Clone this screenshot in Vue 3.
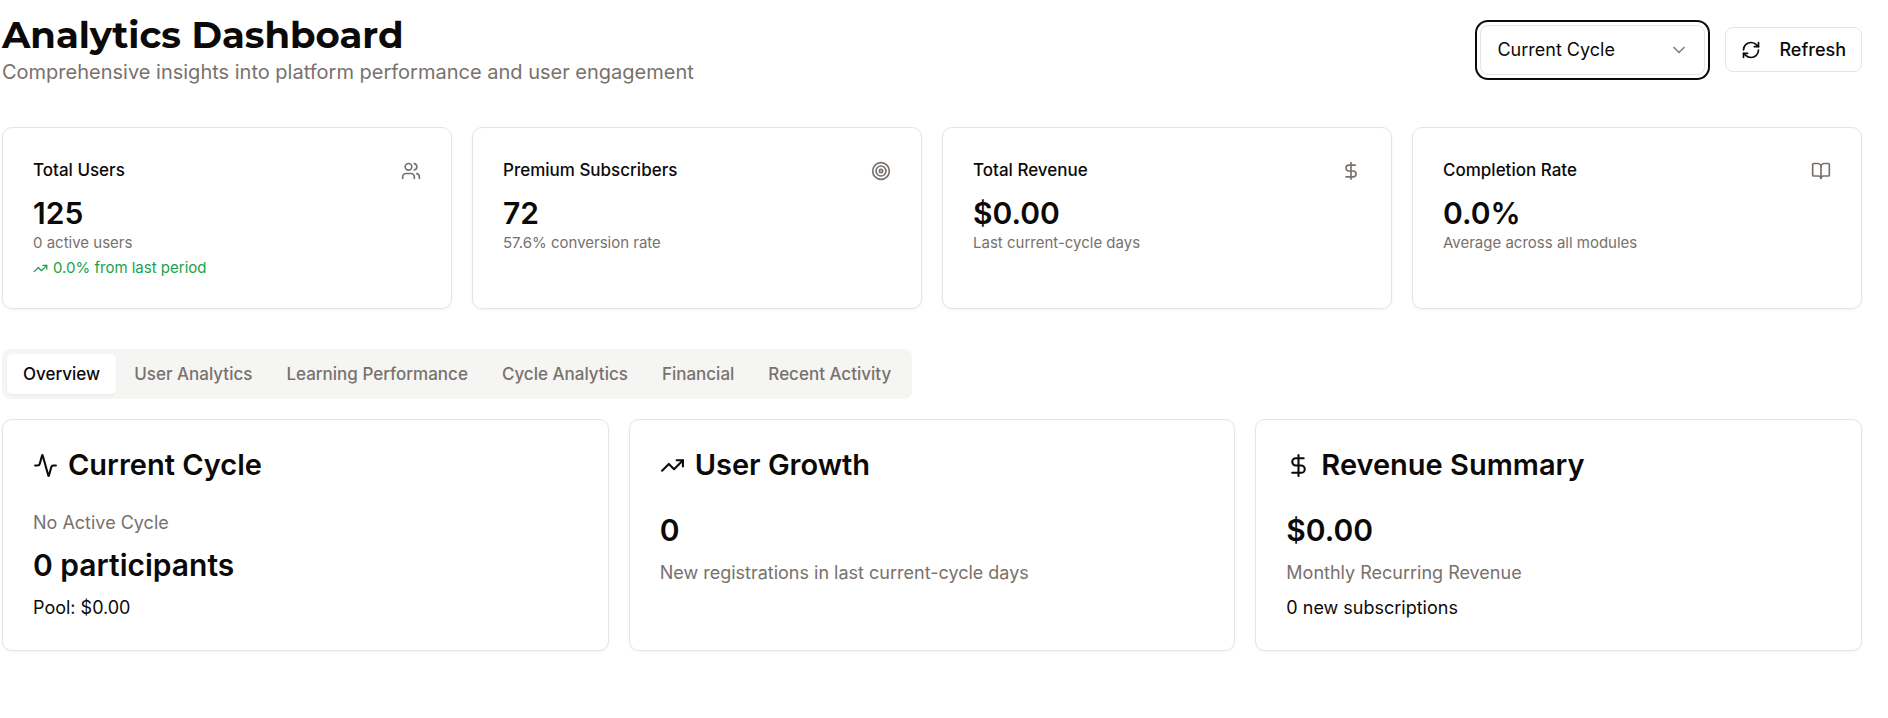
<script setup>
import { ref } from 'vue'

const icons = {
  users: [
    'M16 21v-2a4 4 0 0 0-4-4H6a4 4 0 0 0-4 4v2',
    'M13 7a4 4 0 1 1-8 0 4 4 0 0 1 8 0',
    'M22 21v-2a4 4 0 0 0-3-3.87',
    'M16 3.13a4 4 0 0 1 0 7.75',
  ],
  target: [
    'M22 12a10 10 0 1 1-20 0 10 10 0 0 1 20 0',
    'M18 12a6 6 0 1 1-12 0 6 6 0 0 1 12 0',
    'M14 12a2 2 0 1 1-4 0 2 2 0 0 1 4 0',
  ],
  dollar: ['M12 2v20', 'M17 5H9.5a3.5 3.5 0 0 0 0 7h5a3.5 3.5 0 0 1 0 7H6'],
  book: [
    'M12 7v14',
    'M3 18a1 1 0 0 1-1-1V4a1 1 0 0 1 1-1h5a4 4 0 0 1 4 4 4 4 0 0 1 4-4h5a1 1 0 0 1 1 1v13a1 1 0 0 1-1 1h-6a3 3 0 0 0-3 3 3 3 0 0 0-3-3z',
  ],
  trend: ['M22 7l-8.5 8.5-5-5L2 17', 'M16 7h6v6'],
  activity: [
    'M22 12h-2.48a2 2 0 0 0-1.93 1.46l-2.35 8.36a.25.25 0 0 1-.48 0L9.24 2.18a.25.25 0 0 0-.48 0l-2.35 8.36A2 2 0 0 1 4.49 12H2',
  ],
  refresh: [
    'M3 12a9 9 0 0 1 9-9 9.75 9.75 0 0 1 6.74 2.74L21 8',
    'M21 3v5h-5',
    'M21 12a9 9 0 0 1-9 9 9.75 9.75 0 0 1-6.74-2.74L3 16',
    'M8 16H3v5',
  ],
  chevron: ['m6 9 6 6 6-6'],
}

const period = ref('current-cycle')

const stats = [
  { label: 'Total Users', icon: 'users', value: '125', note: '0 active users', trend: '0.0% from last period' },
  { label: 'Premium Subscribers', icon: 'target', value: '72', note: '57.6% conversion rate' },
  { label: 'Total Revenue', icon: 'dollar', value: '$0.00', note: 'Last current-cycle days' },
  { label: 'Completion Rate', icon: 'book', value: '0.0%', note: 'Average across all modules' },
]

const tabs = ['Overview', 'User Analytics', 'Learning Performance', 'Cycle Analytics', 'Financial', 'Recent Activity']
const activeTab = ref('Overview')

const panels = [
  {
    title: 'Current Cycle',
    icon: 'activity',
    lines: [
      { kind: 'muted', text: 'No Active Cycle' },
      { kind: 'figure', text: '0 participants' },
      { kind: 'plain', text: 'Pool: $0.00' },
    ],
  },
  {
    title: 'User Growth',
    icon: 'trend',
    lines: [
      { kind: 'figure', text: '0' },
      { kind: 'muted', text: 'New registrations in last current-cycle days' },
    ],
  },
  {
    title: 'Revenue Summary',
    icon: 'dollar',
    lines: [
      { kind: 'figure', text: '$0.00' },
      { kind: 'muted', text: 'Monthly Recurring Revenue' },
      { kind: 'plain', text: '0 new subscriptions' },
    ],
  },
]
</script>

<template>
  <main class="page">
    <header class="header">
      <div>
        <h1 class="title">Analytics Dashboard</h1>
        <p class="subtitle">Comprehensive insights into platform performance and user engagement</p>
      </div>
      <div class="actions">
        <div class="picker">
          <select v-model="period" class="picker-select" aria-label="Period">
            <option value="current-cycle">Current Cycle</option>
          </select>
          <svg class="icon picker-chevron" viewBox="0 0 24 24" aria-hidden="true">
            <path v-for="d in icons.chevron" :key="d" :d="d" />
          </svg>
        </div>
        <button type="button" class="refresh">
          <svg class="icon" viewBox="0 0 24 24" aria-hidden="true">
            <path v-for="d in icons.refresh" :key="d" :d="d" />
          </svg>
          Refresh
        </button>
      </div>
    </header>

    <section class="stats" aria-label="Key figures">
      <article v-for="s in stats" :key="s.label" class="card">
        <div class="stat-head">
          <h3 class="stat-label">{{ s.label }}</h3>
          <svg class="icon stat-icon" viewBox="0 0 24 24" aria-hidden="true">
            <path v-for="d in icons[s.icon]" :key="d" :d="d" />
          </svg>
        </div>
        <div class="figure">{{ s.value }}</div>
        <p class="stat-note">{{ s.note }}</p>
        <div v-if="s.trend" class="stat-trend">
          <svg class="icon trend-icon" viewBox="0 0 24 24" aria-hidden="true">
            <path v-for="d in icons.trend" :key="d" :d="d" />
          </svg>
          <span>{{ s.trend }}</span>
        </div>
      </article>
    </section>

    <section class="detail">
      <div class="tabs" role="tablist">
        <button
          v-for="t in tabs"
          :key="t"
          type="button"
          role="tab"
          class="tab"
          :class="{ active: t === activeTab }"
          :aria-selected="t === activeTab"
          @click="activeTab = t"
        >
          {{ t }}
        </button>
      </div>

      <div class="panels">
        <article v-for="p in panels" :key="p.title" class="card">
          <h3 class="panel-title">
            <svg class="icon panel-icon" viewBox="0 0 24 24" aria-hidden="true">
              <path v-for="d in icons[p.icon]" :key="d" :d="d" />
            </svg>
            {{ p.title }}
          </h3>
          <div class="panel-body">
            <div v-for="l in p.lines" :key="l.text" :class="l.kind">{{ l.text }}</div>
          </div>
        </article>
      </div>
    </section>
  </main>
</template>

<style>
body {
  background: #fff;
}
</style>

<style scoped>
.page {
  display: flex;
  flex-direction: column;
  gap: 40px;
  padding: 12px 26px 40px 2px;
  color: #0c0a09;
  font-family: Inter, "Liberation Sans", sans-serif;
  font-size: 18px;
  line-height: 25px;
}

h1,
h3,
p {
  margin: 0;
}

.icon {
  flex: none;
  width: 20px;
  height: 20px;
  fill: none;
  stroke: currentColor;
  stroke-width: 2;
  stroke-linecap: round;
  stroke-linejoin: round;
}

.header {
  display: flex;
  align-items: center;
  justify-content: space-between;
  gap: 20px;
}

.title {
  font-family: Montserrat, "Open Sans", sans-serif;
  font-size: 37px;
  font-weight: 700;
  line-height: 45px;
}

.subtitle {
  color: #78716c;
  font-size: 20px;
  line-height: 30px;
}

.actions {
  display: flex;
  align-items: center;
  gap: 20px;
}

.picker {
  position: relative;
  width: 225px;
}

.picker-select {
  display: block;
  box-sizing: border-box;
  width: 100%;
  height: 50px;
  padding: 0 40px 0 16px;
  appearance: none;
  border: 1px solid #e5e5e5;
  border-radius: 8px;
  outline: none;
  background: #fff;
  box-shadow: 0 0 0 3px #fff, 0 0 0 5px #0c0a09;
  color: inherit;
  font: inherit;
}

.picker-chevron {
  position: absolute;
  top: 15px;
  right: 16px;
  opacity: 0.5;
  pointer-events: none;
}

.refresh {
  display: flex;
  align-items: center;
  gap: 18px;
  height: 45px;
  padding: 0 15px;
  border: 1px solid #e5e5e5;
  border-radius: 8px;
  background: #fff;
  color: inherit;
  font: inherit;
  font-weight: 500;
}

.stats {
  display: grid;
  grid-template-columns: repeat(4, 1fr);
  gap: 20px;
}

.card {
  padding: 30px;
  border: 1px solid #e5e5e5;
  border-radius: 10px;
  background: #fff;
  box-shadow: 0 1px 3px rgba(0, 0, 0, 0.05);
}

.stat-head {
  display: flex;
  align-items: center;
  justify-content: space-between;
  padding-bottom: 10px;
}

.stat-label {
  font-size: 17px;
  font-weight: 500;
}

.stat-icon {
  color: #78716c;
}

.figure {
  font-size: 30px;
  font-weight: 600;
  line-height: 40px;
}

.stat-note,
.stat-trend {
  font-size: 15px;
  line-height: 20px;
}

.stat-note {
  color: #78716c;
}

.stat-trend {
  display: flex;
  align-items: center;
  gap: 5px;
  margin-top: 5px;
  color: #16a34a;
}

.trend-icon {
  width: 15px;
  height: 15px;
}

.detail {
  display: flex;
  flex-direction: column;
  align-items: flex-start;
  gap: 20px;
}

.tabs {
  display: flex;
  gap: 2px;
  padding: 5px;
  border-radius: 8px;
  background: #f5f5f4;
}

.tab {
  padding: 8px 16px 7px;
  border: 0;
  border-radius: 5px;
  background: transparent;
  color: #78716c;
  font: inherit;
  font-size: 17px;
  font-weight: 500;
}

.tab.active {
  background: #fff;
  box-shadow: 0 1px 3px rgba(0, 0, 0, 0.05);
  color: #0c0a09;
}

.panels {
  display: grid;
  grid-template-columns: repeat(3, 1fr);
  gap: 20px;
  align-self: stretch;
}

.panel-title {
  display: flex;
  align-items: center;
  gap: 10px;
  padding-bottom: 30px;
  font-size: 29px;
  font-weight: 600;
  line-height: 30px;
}

.panel-icon {
  width: 25px;
  height: 25px;
}

.panel-body {
  display: flex;
  flex-direction: column;
  gap: 10px;
}

.muted {
  color: #78716c;
}
</style>
